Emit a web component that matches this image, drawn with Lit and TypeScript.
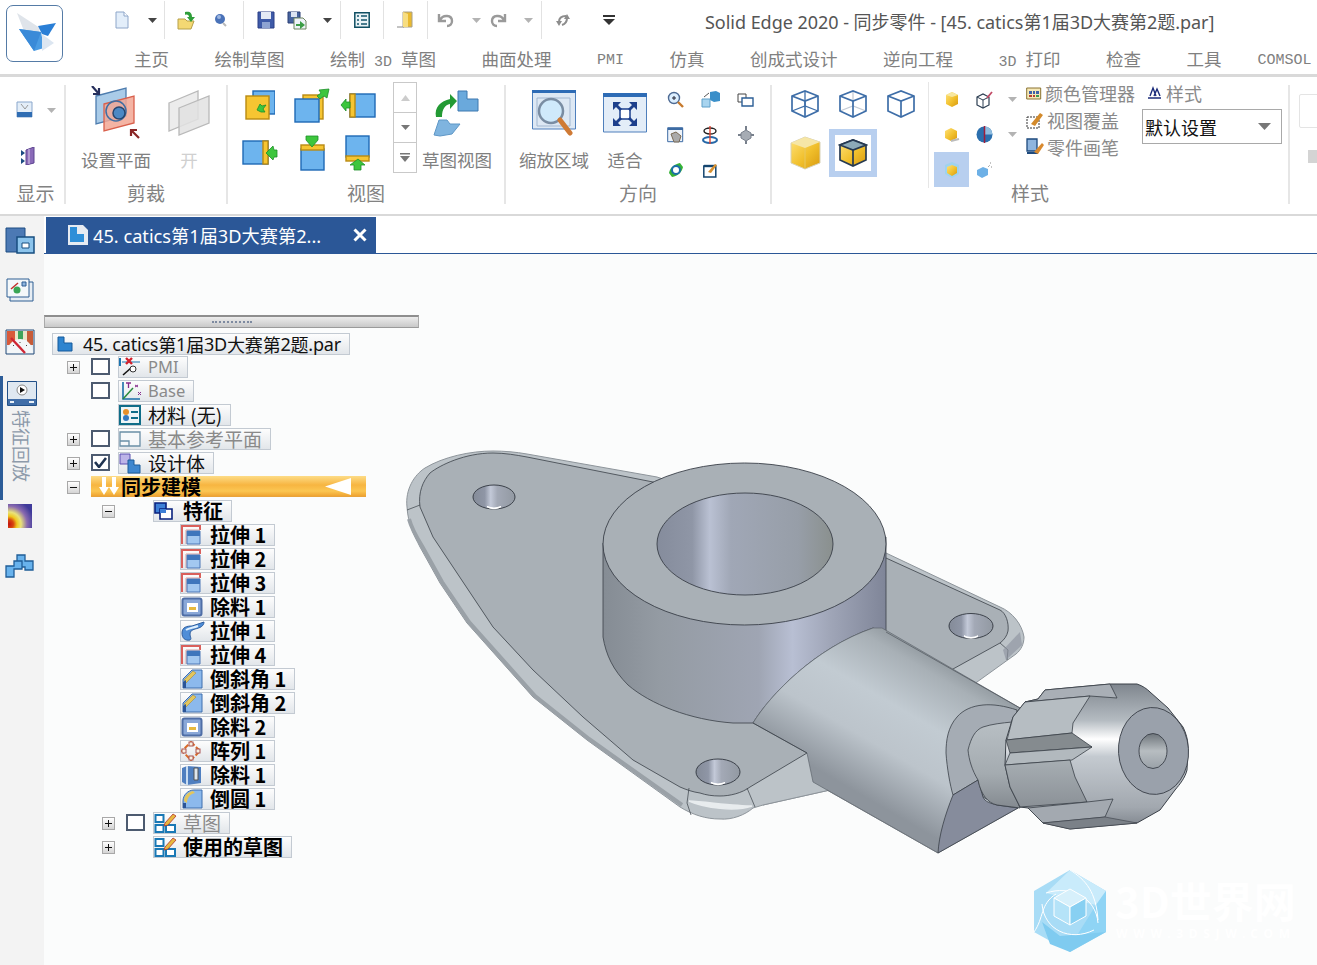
import { LitElement, css, html, svg } from "lit";
import { customElement } from "lit/decorators.js";

const ic = (w: number, h: number, body: unknown) =>
  html`<svg class="ic" width=${w} height=${h} viewBox="0 0 ${w} ${h}">${body}</svg>`;

const B = "#6db4ee", BD = "#1f69b5", Y = "#f6c532", YD = "#b98a12", G = "#3dc63d", GD = "#1d8f2a";

// quick access bar
const qat: Record<string, unknown> = {
  doc: ic(14, 18, svg`<path d="M1 1h8l4 4v12H1z" fill="#e3eefa" stroke="#8ea6c9"/><path d="M9 1v4h4" fill="#fff" stroke="#8ea6c9"/>`),
  open: ic(20, 20, svg`<path d="M1 9h7l2 2h7l-3 8H1z" fill="#f4d873" stroke="#b6a04a"/><path d="M8 2c5-1 7 1 7 5h3l-4 5-4-5h2c0-2-2-3-4-2z" fill="#2f9e3a"/>`),
  ball: ic(14, 16, svg`<circle cx="6" cy="7" r="5" fill="#4a72b8"/><circle cx="5" cy="5" r="2" fill="#9cb6e0"/><path d="M9 11l3 3" stroke="#b9b9b9" stroke-width="2"/>`),
  save: ic(18, 18, svg`<path d="M1 1h16v16H1z" fill="#3e5aa8" stroke="#2a3f86"/><path d="M4 1h10v7H4z" fill="#e4eaf5"/><path d="M5 11h8v6H5z" fill="#8ea3d2"/>`),
  saveall: ic(20, 19, svg`<path d="M1 1h12v11H1z" fill="#47649f" stroke="#2b3f75"/><path d="M4 1h6v5H4z" fill="#dce4f2"/><path d="M7 7h9l3 3v8H7z" fill="#eef3f8" stroke="#6e8560"/><path d="M9 13h4v-3l5 4-5 4v-3H9z" fill="#3c9e46"/>`),
  list: ic(16, 16, svg`<path d="M.8.8h14.4v14.400H.8z" fill="#eaf3f6" stroke="#0f4f63" stroke-width="1.500"/><path d="M3 4h2M7 4h6M3 8h2M7 8h6M3 12h2M7 12h6" stroke="#14566c" stroke-width="1.500"/>`),
  door: ic(18, 18, svg`<path d="M7 1h9v15H7z" fill="#e9b92f" stroke="#a8a08a"/><path d="M1 16h7" stroke="#888"/><path d="M7 1l5 2v13H7z" fill="#f7dd80"/>`),
  undo: ic(18, 16, svg`<path d="M2 2v7h7M3 8c3-6 12-5 12 1 0 3-2 5-5 5" fill="none" stroke="#9a9a9a" stroke-width="2.400"/>`),
  redo: ic(18, 16, svg`<path d="M16 2v7H9M15 8C12 2 3 3 3 9c0 3 2 5 5 5" fill="none" stroke="#9a9a9a" stroke-width="2.400"/>`),
  redo2: ic(16, 16, svg`<path d="M1 9l3 5 3-5zM15 7l-3-5-3 5z" fill="#8d8d8d"/><path d="M4 10c0-4 2-6 7-6M12 6c0 4-2 6-5 7" fill="none" stroke="#8d8d8d" stroke-width="2"/>`),
  more: ic(14, 12, svg`<path d="M1 1h12v2H1z" fill="#333"/><path d="M1 5h12l-6 6z" fill="#333"/>`),
  drop: ic(9, 5, svg`<path d="M0 0h9L4.500 5z" fill="#444"/>`),
  dropg: ic(9, 5, svg`<path d="M0 0h9L4.500 5z" fill="#b3b3b3"/>`),
};

// [icon, width]; a null icon is a separator followed by that much gap
const qatItems: [string | null, number][] = [
  ["doc", 33], ["drop", 16], [null, 12], ["open", 37], ["ball", 29], [null, 13], ["save", 30], ["saveall", 36],
  ["drop", 17], [null, 13], ["list", 29], [null, 12], ["door", 31], [null, 9], ["undo", 35], ["dropg", 17],
  ["redo", 35], ["dropg", 17], [null, 13], ["redo2", 47], ["more", 14],
];

const square = (x: number, y: number, w: number, h: number, f: string, s: string) =>
  svg`<rect x=${x} y=${y} width=${w} height=${h} fill=${f} stroke=${s} stroke-width="1.400"/>`;
const arrow = (p: string) => svg`<path d=${p} fill=${G} stroke=${GD} stroke-width=".8"/>`;

const viewIcons = [
  ic(30, 30, svg`${square(8, 1, 22, 23, B, BD)}${square(1, 6, 23, 23, Y, YD)}${arrow("M12 20l3-6 2 2 4-1-3 4 2 3-4 0z")}`),
  ic(36, 36, svg`${square(9, 8, 20, 24, Y, YD)}${square(1, 12, 24, 23, B, BD)}${arrow("M35 2l-2 9-3-2-4 3-3-3 4-3-2-3z")}`),
  ic(36, 26, svg`${square(10, 2, 25, 23, B, BD)}${square(10, 2, 5, 23, Y, YD)}${arrow("M1 13l5-6v3h4v6H6v3z")}`),
  ic(36, 26, svg`${square(1, 1, 25, 23, B, BD)}${square(21, 1, 5, 23, Y, YD)}${arrow("M35 10v7h-3l-1 3-7-7 7-7 1 4z")}`),
  ic(26, 36, svg`${square(2, 14, 23, 21, B, BD)}${square(2, 10, 23, 5, Y, YD)}${arrow("M7 1h12v4l-6 7-6-7z")}`),
  ic(26, 36, svg`${square(1, 1, 23, 21, B, BD)}${square(1, 21, 23, 5, Y, YD)}${arrow("M13 24l7 6h-4v5H9v-5H5z")}`),
];

const small: Record<string, unknown> = {
  zoom: ic(18, 18, svg`<circle cx="7" cy="7" r="5.500" fill="#dcefff" stroke="#4d6a94" stroke-width="1.400"/><path d="M5 7h4M7 5v4" stroke="#223"/><path d="M11 11l5 5" stroke="#c77a2d" stroke-width="2.400"/>`),
  boxes: ic(20, 17, svg`<path d="M9 1l6-1 4 2v8l-6 1-4-2z" fill="#3a8fc9"/><path d="M1 8h8v8H1z" fill="#a8d4ef" stroke="#5e9fc8"/><path d="M3 6l5-4" stroke="#555"/>`),
  wins: ic(17, 14, svg`<path d="M1 1h8v8H1z" fill="#fff" stroke="#444"/><path d="M5 5h11v8H5z" fill="#fff" stroke="#2d5f96" stroke-width="1.400"/>`),
  hand: ic(17, 16, svg`<path d="M.7.7h15v14h-15z" fill="#eef3f9" stroke="#3d6ba3"/><path d="M1 1h15v2H1z" fill="#3d6ba3"/><path d="M4 7l5-2 5 4-2 6H7z" fill="#aaa" stroke="#7a6a55"/>`),
  rotate: ic(17, 18, svg`<ellipse cx="8" cy="14" rx="7" ry="3" fill="none" stroke="#2668a8" stroke-width="2"/><ellipse cx="8" cy="5" rx="6" ry="3" fill="none" stroke="#222" stroke-width="1.400"/><path d="M8 0v18" stroke="#d43" stroke-width="1.400"/>`),
  cube4: ic(16, 18, svg`<path d="M8 4l5 3v5l-5 3-5-3V7z" fill="#a6acb4" stroke="#78808c"/><path d="M8 0v4M8 15v3M0 9h3M13 9h3" stroke="#78808c" stroke-width="2"/>`),
  spin: ic(16, 16, svg`<path d="M1 11C2 5 7 2 12 1l3 4c-1 5-5 9-11 10z" fill="#35b235"/><circle cx="8" cy="8" r="4" fill="#fff" stroke="#1c6ea8" stroke-width="2"/>`),
  paint: ic(15, 16, svg`<path d="M.8 4h12v11H.8z" fill="#fff" stroke="#14456f" stroke-width="1.500"/><path d="M1 4h12" stroke="#14456f" stroke-width="2.400"/><path d="M5 10l7-8 2 1-6 8z" fill="#d7902f"/>`),
};

const HEX = "M2 7l13-5 13 5v15l-13 6-13-6z";
const FRONT = "M2 7l13 5 13-5M15 12v16";
const HIDDEN = "M15 2v15M2 22l13-5 13 5";
const wire = (hiddenColor: string | null) => ic(30, 30, svg`
  ${hiddenColor ? svg`<path d=${HIDDEN} fill="none" stroke=${hiddenColor} stroke-width="1.300"/>` : ""}
  <path d=${HEX} fill="none" stroke="#3e6ea8" stroke-width="1.700"/>
  <path d=${FRONT} fill="none" stroke="#3e6ea8" stroke-width="1.700"/>`);
const cubes = [
  wire("#3e6ea8"),
  wire("#c5ccd6"),
  wire(null),
  ic(32, 34, svg`<path d="M2 7l14-6 15 5v21l-15 6-14-6z" fill="url(#gold)" stroke="#d8d2b8"/><path d="M2 7l14 5 15-6-15-5z" fill="#f6e6a6"/><path d="M16 12v21" stroke="#e8c860" />`),
  ic(30, 30, svg`<path d=${HEX} fill="url(#gold)" stroke="#263a52" stroke-width="1.700"/><path d="M2 7l13 5 13-5-13-5z" fill="#8caab8" stroke="#263a52" stroke-width="1.700"/><path d="M15 12v16" stroke="#263a52" stroke-width="1.700"/>`),
];

const mini: Record<string, unknown> = {
  gold: ic(14, 16, svg`<path d="M1 3l6-3 6 3v9l-6 3-6-3z" fill="url(#gold)"/><path d="M1 3l6 2 6-2-6-3z" fill="#f7e7a0"/>`),
  frame: ic(18, 18, svg`<path d="M1 6l6-3 6 3v8l-6 3-6-3z" fill="#fff" stroke="#2c3e52" stroke-width="1.200"/><path d="M1 6l6 3 6-3M7 9v8" stroke="#2c3e52" fill="none"/><path d="M11 7l5-6" stroke="#c24a66" stroke-width="1.800"/>`),
  goldS: ic(16, 14, svg`<path d="M1 3l6-3 6 3v7l-6 3-6-3z" fill="url(#gold)"/><path d="M7 13l8-2" stroke="#bbb" stroke-width="2"/>`),
  globe: ic(17, 17, svg`<circle cx="8.500" cy="8.500" r="8" fill="#2b6fae"/><path d="M8.500 8.500V.5A8 8 0 0 1 16.500 8.500z" fill="#8fbde0"/><path d="M8.500 0v17" stroke="#a01c3a" stroke-width="1.500"/>`),
  sel: ic(16, 16, svg`<path d="M1 3l7-3 7 3v9l-7 4-7-4z" fill="#9fd3ee"/><path d="M3 5l5-2 5 2v6l-5 3-5-3z" fill="url(#gold)"/>`),
  spray: ic(17, 16, svg`<path d="M1 8l6-3 5 2v6l-6 3-5-3z" fill="#6db0e6"/><path d="M12 5l2-2M14 1h2M15 5h2" stroke="#888" stroke-dasharray="1 1"/>`),
};

const listIcons = [
  ic(16, 14, svg`<path d="M.7 2h14v11H.7z" fill="#f6e9b8" stroke="#8a7330"/><path d="M3 5h3v3H3zM7 5h2v3H7zM10 5h3v3h-3z" fill="#3f62a8"/><path d="M3 9h3v2H3zM7 9h2v2H7z" fill="#b6402e"/><path d="M10 9h3v2h-3z" fill="#3c9a4d"/>`),
  ic(18, 18, svg`<rect x="1" y="6" width="12" height="11" fill="#fff" stroke="#333" stroke-dasharray="2 1"/><path d="M5 13l9-11 3 2-8 11z" fill="#d38a2b"/>`),
  ic(18, 18, svg`<path d="M1 1h10v12H1z" fill="#8fb5de" stroke="#1e4a7d" stroke-width="1.300"/><path d="M1 15h11" stroke="#1e4a7d" stroke-width="2"/><path d="M8 14l8-9 2 2-6 9z" fill="#d98a2f"/>`),
];

const trIcons: Record<string, unknown> = {
  root: ic(17, 16, svg`<path d="M1 1h6v6h8v8H1z" fill="#2e84cf" stroke="#155b9c"/>`),
  pmi: ic(22, 22, svg`<path d="M1 2v8" stroke="#1a74b0" stroke-width="2"/><path d="M3 6h18" stroke="#1a74b0"/><path d="M7 2l6 6M13 2l-6 6" stroke="#d2202c" stroke-width="2.400"/><path d="M4 19l8-7" stroke="#111" stroke-width="1.600"/><circle cx="14" cy="13" r="3" fill="#fff" stroke="#333"/>`),
  base: ic(24, 22, svg`<path d="M4 2v17h17" fill="none" stroke="#1a6ea8" stroke-width="1.600"/><path d="M4 19L14 8" stroke="#2a8a3a" stroke-width="1.500"/><path d="M7 3h5M9.500 3v5" stroke="#862c8c" stroke-width="1.300"/><path d="M16 5l3 2M19 5l-3 2M19 12l3 3M22 12l-3 3" stroke="#862c8c"/>`),
  mat: ic(22, 20, svg`<path d="M1 1h20v18H1z" fill="#eef5f7" stroke="#0f6d88" stroke-width="2"/><circle cx="7" cy="7" r="3" fill="#e8902a"/><circle cx="7" cy="13" r="3" fill="#3479c0"/><path d="M12 7h7M12 13h7" stroke="#0f6d88" stroke-width="2"/>`),
  plane: ic(22, 20, svg`<path d="M1 3h20v14H1z" fill="#f6f8fa" stroke="#6a8ea6" stroke-width="1.300"/><path d="M1 12h9v5" fill="none" stroke="#6a8ea6" stroke-width="1.300"/>`),
  body: ic(22, 21, svg`<path d="M1 1h10v10H1z" fill="#bdb4e8" stroke="#5a4fb0"/><path d="M9 7h6v5h6v8H9z" fill="#3f87cf" stroke="#1d5c9a"/>`),
  feat: ic(20, 20, svg`<path d="M1 2h11v10H1z" fill="#3d7fd6" stroke="#08217e" stroke-width="1.600"/><path d="M6 8h12v10H6z" fill="#fff" stroke="#08217e" stroke-width="1.600"/><path d="M6 8h6v4H6z" fill="#3d7fd6"/>`),
  ext: ic(20, 20, svg`<path d="M1 19V1h18v4" fill="none" stroke="#d9605c" stroke-width="2"/><path d="M5 19V5h14" fill="none" stroke="#d9a0a0"/><path d="M6 6h13v13H6z" fill="#a3c8f0" stroke="#4a77b6"/><path d="M6 6h13v5H6z" fill="#3f76bc"/>`),
  cut: ic(22, 20, svg`<rect x="1.500" y="1.500" width="19" height="17" rx="2" fill="#8aa8d8" stroke="#4f6ea6" stroke-width="2"/><path d="M6 6h11v9H6z" fill="#fff"/><path d="M8 10h7v3H8z" fill="#e7b93e"/>`),
  sweep: ic(24, 20, svg`<path d="M1 12c0-6 5-7 10-7l12-4c0 4-4 6-9 7-3 1-5 2-5 5 0 3 2 5 0 6-5 1-8-2-8-7z" fill="#4f8ed8" stroke="#2f5e9e"/><path d="M5 9c3-2 7-2 12-4" stroke="#dff0ff" stroke-width="2" fill="none"/>`),
  cham: ic(22, 20, svg`<path d="M2 19V10L11 1h10v18z" fill="#8cb9ec" stroke="#3f6eae"/><path d="M3 11L12 2l3 2-10 10z" fill="#e3c65d" stroke="#a48c3a" stroke-width=".6"/><path d="M2 19v-6l3-2v8z" fill="#2b5597"/>`),
  patt: ic(20, 20, svg`<path d="M10 1l9 9-9 9-9-9z" fill="none" stroke="#d96a28" stroke-width="2" stroke-dasharray="5 2"/><rect x="8" y="1" width="4" height="4" fill="#f8efe0" stroke="#a55"/><rect x="1" y="8" width="4" height="4" fill="#f8efe0" stroke="#a55"/><rect x="15" y="8" width="4" height="4" fill="#f8efe0" stroke="#a55"/><rect x="8" y="15" width="4" height="4" fill="#f8efe0" stroke="#a55"/>`),
  rev: ic(22, 20, svg`<path d="M1 3l5-2 14 1v16l-14 2-5-3z" fill="#4f7fc0"/><path d="M6 1v19" stroke="#c9ddf2" stroke-width="2"/><path d="M13 3h4v12h-4z" fill="#dfe7ee" stroke="#555"/>`),
  round: ic(22, 20, svg`<path d="M2 19v-7C2 6 7 1 13 1h8v18z" fill="#8cb9ec" stroke="#3f6eae"/><path d="M3 12c0-5 4-9 9-10l2 2C9 5 6 9 6 14z" fill="#e3c65d"/><path d="M2 19v-5h3v5z" fill="#2b5597"/>`),
  sk: ic(24, 21, svg`<path d="M1.500 2h8v7h-8zM1.500 12h8v7h-8zM12 12h9v7h-9z" fill="#fff" stroke="#1978b5" stroke-width="2"/><path d="M11 10l8-9 3 2-8 9-4 1z" fill="#e7b93e" stroke="#b0302a" stroke-width=".8"/>`),
};

const railIcons = [
  ic(30, 27, svg`<path d="M1 1h19v24H1z" fill="#4c79b4" stroke="#1c4c82"/><path d="M12 10h17v16H12z" fill="#8cc4ec" stroke="#174e80" stroke-width="1.500"/><path d="M17 16h7v5h-7z" fill="#fff" stroke="#174e80"/>`),
  ic(28, 24, svg`<path d="M4 4h23v19H4z" fill="#e7edf3" stroke="#2f5f93"/><path d="M1 1h22v18H1z" fill="#f4f8fa" stroke="#2f5f93"/><path d="M5 11l7-6" stroke="#c2312c" stroke-width="1.500"/><circle cx="11" cy="12" r="3.500" fill="#3aa655"/><path d="M16 4h4v4h-4z" fill="#8fb5de" stroke="#2f5f93"/>`),
  ic(30, 26, svg`<path d="M1 1h28v24H1z" fill="#e7edf3" stroke="#224a78"/><path d="M2 2h8v14H2z" fill="#d8593a"/><path d="M10 2h4v9h-4z" fill="#ebe4c8"/><path d="M13 2h5v9h-5z" fill="#3ea35a"/><path d="M18 2h4v9h-4z" fill="#ebe4c8"/><path d="M22 2h6v14h-6z" fill="#c75b38"/><path d="M2 24c1-9 6-14 13-14s12 5 13 14z" fill="#f3f6f8"/><path d="M8 16l1 1M15 13v1M22 16l-1 1" stroke="#444"/><path d="M6 9l14 15" stroke="#cf2433" stroke-width="2.400"/>`),
  ic(30, 25, svg`<path d="M.5.500h29v24H.5z" fill="#dfe8f1" stroke="#225088"/><path d="M1 18h28v6H1z" fill="#416ea8"/><path d="M3 20h4v2H3zM22 20h5v2h-5z" fill="#eaf1f8"/><circle cx="15" cy="9" r="5" fill="#fff" stroke="#888"/><path d="M13 6l5 3-5 3z" fill="#111"/>`),
  ic(24, 24, svg`<defs><radialGradient id="heat" cx="4%" cy="84%" r="105%"><stop offset="0" stop-color="#c21212"/><stop offset=".18" stop-color="#d8480e"/><stop offset=".32" stop-color="#efc820"/><stop offset=".48" stop-color="#e9e27a"/><stop offset=".72" stop-color="#8a6ab0"/><stop offset="1" stop-color="#3f3a9a"/></radialGradient></defs><rect width="24" height="24" fill="url(#heat)"/>`),
  ic(30, 24, svg`<path d="M12 1h8v6h8v9h-8v-3h-7v-4h-1z" fill="#68b2ec" stroke="#1f5d97" stroke-width="1.300"/><path d="M1 12h8V7h8v8H9v8H1z" fill="#68b2ec" stroke="#1f5d97" stroke-width="1.300"/>`),
];

type Row = { level: number; exp?: string; check?: string; icon: string; text: string; dim?: boolean; bold?: boolean };
const rows: Row[] = [
  { level: 0, exp: "+", check: "off", icon: "pmi", text: "PMI", dim: true },
  { level: 0, check: "off", icon: "base", text: "Base", dim: true },
  { level: 0, icon: "mat", text: "材料 (无)" },
  { level: 0, exp: "+", check: "off", icon: "plane", text: "基本参考平面", dim: true },
  { level: 0, exp: "+", check: "on", icon: "body", text: "设计体" },
];
const rows2: Row[] = [
  { level: 1, exp: "-", icon: "feat", text: "特征", bold: true },
  ...([["ext", "拉伸 1"], ["ext", "拉伸 2"], ["ext", "拉伸 3"], ["cut", "除料 1"], ["sweep", "拉伸 1"], ["ext", "拉伸 4"], ["cham", "倒斜角 1"], ["cham", "倒斜角 2"], ["cut", "除料 2"], ["patt", "阵列 1"], ["rev", "除料 1"], ["round", "倒圆 1"]] as const).map(
    ([icon, text]) => ({ level: 2, icon, text, bold: true })
  ),
  { level: 1, exp: "+", check: "off", icon: "sk", text: "草图", dim: true },
  { level: 1, exp: "+", icon: "sk", text: "使用的草图", bold: true },
];

const hole = (cx: number, cy: number, rx: number, ry: number) => svg`
  <ellipse cx=${cx} cy=${cy} rx=${rx} ry=${ry} fill="url(#holeS)" stroke="#30363e" stroke-width=".9"/>
  <path d="M${cx - 7} ${cy + ry - 2.4}q7 3 14 0q-7 3.800-14 0z" fill="#fff" stroke="#fff" stroke-width="1.400"/>`;

@customElement("app-root")
export class AppRoot extends LitElement {
  static styles = css`
    :host { display: block; width: 1317px; height: 965px; overflow: hidden; background: #fff; font-family: "Noto Sans CJK SC", "Noto Sans", sans-serif; color: #7d7d7d; }
    .ic { display: block; flex: none; }
    .head { display: flex; height: 74px; border-bottom: 3px solid #d9d9d9; }
    .logo { flex: none; width: 57px; height: 57px; margin: 5px 5px 0 6px; box-sizing: border-box; border: 1.500px solid #557ba6; border-radius: 7px; display: flex; align-items: center; justify-content: center; }
    .head-right { flex: 1; min-width: 0; }
    .qat { display: flex; align-items: center; height: 40px; padding-left: 47px; }
    .qat-item { flex: none; display: flex; align-items: center; }
    .qat-sep { flex: none; width: 1px; height: 38px; background: #e2e2e2; }
    .title { font-family: "Noto Sans", "Noto Sans CJK SC", sans-serif; font-size: 18px; color: #555; white-space: nowrap; margin-left: 89px; margin-top: 1px; letter-spacing: -.03px; }
    .title span { font-family: "Noto Sans CJK SC", sans-serif; }
    .tabs { display: flex; gap: 45.500px; padding-left: 66px; height: 34px; font-size: 17.500px; line-height: 38px; color: #808080; white-space: nowrap; }
    .m { font-family: "Liberation Mono", monospace; font-size: 15px; white-space: pre; }
    .tabs > .m { margin-top: 2px; }
    .tabs .last { margin-left: -9.500px; }

    .ribbon { display: flex; height: 139px; border-bottom: 2px solid #d9d9d9; overflow: hidden; box-sizing: border-box; }
    .group { flex: none; display: flex; flex-direction: column; height: 128px; }
    .body { flex: none; display: flex; height: 104px; }
    .label { height: 24px; line-height: 24px; font-size: 19px; text-align: center; color: #828282; }
    .sep { flex: none; width: 2px; height: 119px; margin-top: 8px; background: #e6e6e6; }
    .g-display { width: 64px; } .g-clip { width: 160px; } .g-view { width: 276px; } .g-orient { width: 264px; } .g-style { width: 516px; }
    .g-display .label { padding-left: 7px; }
    .g-display .body { flex-direction: column; padding: 10px 0 0 16px; box-sizing: border-box; }
    .stack { display: flex; align-items: center; gap: 13px; height: 46px; }
    .stack + .stack { padding-left: 5px; }
    .g-clip .body { padding-left: 15px; }
    .big { flex: none; display: flex; flex-direction: column; align-items: center; }
    .big-ic { height: 71px; display: flex; align-items: center; justify-content: center; }
    .big-t { font-size: 17.500px; line-height: 24px; white-space: nowrap; color: #808080; }
    .big-t.off { color: #d0d0d0; }
    .w70 { width: 70px; } .w72 { width: 72px; } .w44 { width: 44px; margin-left: 16px; }
    .g-view .body { padding-left: 6px; }
    .grid6 { display: grid; grid-template-columns: 52px 52px 40px; grid-auto-rows: 48px; padding-top: 4px; place-items: center; }
    .spin { flex: none; width: 24px; height: 91px; margin: 5px 5px 0 15px; box-sizing: border-box; border: 1px solid #c9c9c9; display: grid; grid-template-rows: 29px 30px 1fr; }
    .spin div { display: flex; align-items: center; justify-content: center; }
    .spin div + div { border-top: 1px solid #c9c9c9; }
    .g-orient .body { padding-left: 12px; }
    .fit { width: 44px; margin-left: 13px; }
    .grid9 { display: grid; grid-template-columns: repeat(3, 35px); grid-auto-rows: 35px; margin: 5px 0 0 11px; place-items: center; align-content: start; }
    .g-style .body { padding-left: 9px; }
    .grid-cubes { display: grid; grid-template-columns: repeat(3, 48px); grid-template-rows: 50px 48px; place-items: center; margin-top: 2px; flex: none; height: 100px; width: 144px; }
    .on { background: #b8cfef; }
    .cube-on { width: 48px; height: 48px; display: flex; align-items: center; justify-content: center; }
    .cube-on > div { width: 36px; height: 36px; background: #fff; display: flex; align-items: center; justify-content: center; }
    .vsep { flex: none; width: 1px; height: 106px; margin: 5px 5px 0 3px; background: #e6e6e6; }
    .grid-mini { display: grid; grid-template-columns: 35px 31px 25px; grid-auto-rows: 35px; place-items: center; margin-top: 5px; align-content: start; flex: none; }
    .grid-mini .on { width: 35px; height: 35px; display: flex; align-items: center; justify-content: center; }
    .list { flex: none; width: 116px; padding-top: 2px; margin-left: 1px; }
    .list div { display: flex; align-items: center; gap: 2px; height: 27px; font-size: 18px; white-space: nowrap; color: #8a8a8a; }
    .list svg { margin-right: 1px; }
    .style-col { flex: none; width: 140px; padding-top: 2px; }
    .style-h { height: 27px; display: flex; align-items: center; gap: 4px; padding-left: 5px; font-size: 18px; color: #8a8a8a; }
    .combo { box-sizing: border-box; height: 35px; margin-top: 3px; border: 1px solid #a9a9a9; display: flex; align-items: center; justify-content: space-between; padding: 0 10px 0 2px; font-size: 18px; color: #111; }
    .rest { display: flex; flex-direction: column; padding: 17px 0 0 9px; }
    .rest i { display: block; width: 40px; height: 34px; box-sizing: border-box; border: 1px solid #e4e4e4; margin-bottom: 22px; border-radius: 2px; }
    .rest b { display: block; width: 14px; height: 13px; margin-left: 9px; background: #d4d4d4; }

    .lower { position: relative; height: 749px; display: flex; background: #fbfcfc; }
    .model { position: absolute; left: 0; top: 0; pointer-events: none; }
    .rail { flex: none; width: 44px; background: #f3f3f3; display: flex; flex-direction: column; align-items: center; padding: 11px 4px 0 0; box-sizing: border-box; z-index: 1; }
    .rail-i { height: 51px; display: flex; justify-content: center; flex: none; }
    .rail-i.play { height: 124px; width: 40px; flex-direction: column; align-items: center; justify-content: flex-start; padding: 5px 0 0 1px; box-sizing: border-box; margin-top: -4px; border-left: 3px solid #2c5c98; margin-left: 0; }
    .rail-i.grad { height: 50px; margin-top: 4px; }
    .vtext { writing-mode: vertical-rl; text-orientation: sideways; font-size: 18px; color: #8d9aaa; margin-top: 4px; line-height: 20px; }
    .main { flex: 1; min-width: 0; z-index: 1; }
    .doc-row { height: 38px; display: flex; align-items: flex-end; box-sizing: border-box; border-bottom: 1px solid #2b5797; padding-left: 2px; background: #fff; }
    .doc-tab { width: 330px; height: 36px; background: #2b5797; color: #fff; display: flex; align-items: center; box-sizing: border-box; padding-left: 21px; font-size: 18.200px; white-space: nowrap; }
    .doc-tab .t { margin-left: 4px; flex: 1; overflow: hidden; font-family: "Noto Sans", "Noto Sans CJK SC", sans-serif; }
    .doc-tab .t span { font-family: "Noto Sans CJK SC", sans-serif; }
    .doc-tab .x { flex: none; width: 32px; display: flex; justify-content: center; }
    .splitter { width: 375px; height: 13px; margin-top: 61px; box-sizing: border-box; border-top: 2px solid #8e8e8e; border-bottom: 1px solid #9a9a9a; border-left: 1px solid #aaa; border-right: 1px solid #aaa; background: linear-gradient(#ececec, #c9c9c9); display: flex; justify-content: center; align-items: center; }
    .splitter span { width: 40px; height: 0; border-top: 2px dotted #7d8aa0; }
    .tree { padding-top: 5px; }
    .row { display: flex; align-items: flex-start; height: 24px; }
    .root-row { height: 23px; padding-left: 8px; }
    .l0 { padding-left: 23px; } .l1 { padding-left: 58px; } .l2 { padding-left: 85px; }
    .slot-e { flex: none; width: 24px; height: 22px; display: flex; align-items: center; }
    .slot-c { flex: none; width: 27px; height: 22px; display: flex; align-items: center; }
    .exp { width: 13px; height: 13px; box-sizing: border-box; border: 1px solid #a8a8a8; background: linear-gradient(#fff, #d4d4d4); display: flex; align-items: center; justify-content: center; }
    .chk { width: 19px; height: 17px; margin-top: -1px; box-sizing: border-box; border: 2px solid #4d5b70; background: #fff; display: flex; align-items: center; justify-content: center; }
    .pill { height: 22px; box-sizing: border-box; border: 1px solid #c3cad2; background: linear-gradient(#fdfdfd, #e2e6ea); display: flex; align-items: center; padding: 0 8px 0 0; white-space: nowrap; color: #111; font-size: 19px; line-height: 20px; }
    .ib { flex: none; width: 22px; margin-right: 7px; }
    .pill.dim { color: #8a8a8a; }
    .pill.bold { font-weight: 700; font-size: 20px; color: #000; }
    .pill.root { padding: 0 8px 0 4px; font-size: 18px; font-family: "Noto Sans", "Noto Sans CJK SC", sans-serif; letter-spacing: -.2px; }
    .pill.root .ic { margin-right: 9px; }
    .pill.root span { font-family: "Noto Sans CJK SC", sans-serif; }
    .pill.base { font-family: "Noto Sans", sans-serif; font-size: 16.500px; }
    .sync { width: 275px; height: 21px; background: linear-gradient(#fddc86, #f7b541 45%, #fbc652 75%, #efa432); border-bottom: 1px solid #e8a33c; display: flex; align-items: center; justify-content: space-between; padding: 0 14px 0 8px; box-sizing: border-box; font-weight: 700; font-size: 20px; color: #000; }
    .sync div { display: flex; align-items: center; gap: 2px; }
  `;

  private treeRow(r: Row) {
    return html`<div class="row l${r.level}">
      <div class="slot-e">${r.exp ? html`<div class="exp">${ic(9, 9, svg`<path d=${r.exp === "+" ? "M1 4.500h7M4.500 1v7" : "M1 4.500h7"} stroke="#111"/>`)}</div>` : ""}</div>
      <div class="slot-c">${r.check ? html`<div class="chk">${r.check === "on" ? ic(13, 11, svg`<path d="M1 5l4 5 7-9" fill="none" stroke="#1f3350" stroke-width="2.600"/>`) : ""}</div>` : ""}</div>
      <div class="pill ${r.dim ? "dim" : ""} ${r.bold ? "bold" : ""} ${r.text === "Base" || r.text === "PMI" ? "base" : ""}"><div class="ib">${trIcons[r.icon]}</div>${r.text}</div>
    </div>`;
  }

  private ribbon() {
    return html`<div class="ribbon">
      <div class="group g-display">
        <div class="body">
          <div class="stack">${ic(18, 18, svg`<path d="M1 1h15v15H1z" fill="#e4eef8" stroke="#8aa7cc"/><path d="M1 11h15v5H1z" fill="#2f6db3"/><path d="M5 3l4 5 3-4" stroke="#999" fill="none"/>`)}${qat.dropg}</div>
          <div class="stack">${ic(14, 18, svg`<path d="M5 3l8-3v16l-8 2z" fill="#8a6ab8" stroke="#5d4490"/><path d="M8 2v15" stroke="#d8cce8"/><path d="M0 3l4 3-4 3zM0 11l4 3-4 3z" fill="#1c4c82"/>`)}</div>
        </div>
        <div class="label">显示</div>
      </div>
      <div class="sep"></div>
      <div class="group g-clip">
        <div class="body">
          <div class="big w70">
            <div class="big-ic">${ic(50, 54, svg`
              <path d="M5 10l30-8v28L5 38z" fill="#a9cbe8" stroke="#4d7cae" stroke-width="1.300"/>
              <path d="M13 18l30-8v27l-30 8z" fill="#f2a794" fill-opacity=".85" stroke="#d9604c" stroke-width="1.300"/>
              <circle cx="25" cy="25" r="10" fill="none" stroke="#3f6ea3" stroke-width="1.500"/>
              <circle cx="28" cy="27" r="6" fill="#4c88c4" stroke="#27466f" stroke-width="1.500"/>
              <path d="M1 0l7 8m0-6v6H2" fill="none" stroke="#262f5c" stroke-width="2.200"/>
              <path d="M48 52l-8-8m0 6v-6h6" fill="none" stroke="#8a2626" stroke-width="2.200"/>`)}</div>
            <div class="big-t">设置平面</div>
          </div>
          <div class="big w44">
            <div class="big-ic">${ic(42, 46, svg`
              <path d="M1 13L30 1v28L1 41z" fill="#ececec" stroke="#b9b9b9" stroke-width="1.300"/>
              <path d="M11 18l30-12v27L11 45z" fill="#e2e2e2" fill-opacity=".85" stroke="#b9b9b9" stroke-width="1.300"/>`)}</div>
            <div class="big-t off">开</div>
          </div>
        </div>
        <div class="label">剪裁</div>
      </div>
      <div class="sep"></div>
      <div class="group g-view">
        <div class="body">
          <div class="grid6">${viewIcons}</div>
          <div class="spin">
            <div>${ic(9, 6, svg`<path d="M0 6h9L4.500 0z" fill="#ccc"/>`)}</div>
            <div>${ic(9, 5, svg`<path d="M0 0h9L4.500 5z" fill="#777"/>`)}</div>
            <div>${ic(10, 9, svg`<path d="M0 0h10v1.500H0z" fill="#777"/><path d="M0 3h10L5 9z" fill="#777"/>`)}</div>
          </div>
          <div class="big w70">
            <div class="big-ic">${ic(48, 48, svg`
              <path d="M25 2h9v8h11v12H25z" fill="#6aa9dc" stroke="#3d78b0"/>
              <path d="M1 46l5-15h8l3 4h10l-8 10-12 2z" fill="#7fb4df" stroke="#5f97c6"/>
              <path d="M3 28C1 18 8 12 17 10V5l7 7-7 8v-5c-5 1-8 5-8 13z" fill="#239a34"/>`)}</div>
            <div class="big-t">草图视图</div>
          </div>
        </div>
        <div class="label">视图</div>
      </div>
      <div class="sep"></div>
      <div class="group g-orient">
        <div class="body">
          <div class="big w72">
            <div class="big-ic">${ic(44, 46, svg`
              <path d="M.5 1h43v38H.5z" fill="#dde8f4" stroke="#4e7fbc"/><path d="M0 0h44v3H0z" fill="#2d6bb5"/>
              <path d="M5 8h33v28H5z" fill="none" stroke="#a2b7d0"/>
              <circle cx="19" cy="21" r="12" fill="#cfe9fb" stroke="#7a8da3" stroke-width="2.500"/>
              <path d="M28 30l10 13" stroke="#cf7a35" stroke-width="5" stroke-linecap="round"/>`)}</div>
            <div class="big-t">缩放区域</div>
          </div>
          <div class="big fit">
            <div class="big-ic">${ic(44, 40, svg`
              <path d="M.5 1h43v38H.5z" fill="#e3edf8" stroke="#4e7fbc"/><path d="M0 0h44v4H0z" fill="#2d6bb5"/>
              <rect x="17" y="16" width="10" height="10" fill="#fff" stroke="#1c3f8c" stroke-width="1.500"/>
              <path d="M10 9h8l-3 3 4 4-2 2-4-4-3 3zM34 9h-8l3 3-4 4 2 2 4-4 3 3zM10 33h8l-3-3 4-4-2-2-4 4-3-3zM34 33h-8l3-3-4-4 2-2 4 4 3-3z" fill="#1c3f8c"/>`)}</div>
            <div class="big-t">适合</div>
          </div>
          <div class="grid9">
            ${small.zoom}${small.boxes}${small.wins}${small.hand}${small.rotate}${small.cube4}${small.spin}${small.paint}
          </div>
        </div>
        <div class="label">方向</div>
      </div>
      <div class="sep"></div>
      <div class="group g-style">
        <div class="body">
          <div class="grid-cubes">
            ${cubes[0]}${cubes[1]}${cubes[2]}${cubes[3]}
            <div class="cube-on on"><div>${cubes[4]}</div></div>
          </div>
          <div class="vsep"></div>
          <div class="grid-mini">
            ${mini.gold}${mini.frame}${qat.dropg}
            ${mini.goldS}${mini.globe}${qat.dropg}
            <div class="on">${mini.sel}</div>${mini.spray}
          </div>
          <div class="list">
            <div>${listIcons[0]}颜色管理器</div>
            <div>${listIcons[1]}视图覆盖</div>
            <div>${listIcons[2]}零件画笔</div>
          </div>
          <div class="style-col">
            <div class="style-h">${ic(15, 14, svg`<path d="M1 12h13" stroke="#1a2a7a" stroke-width="1.500"/><path d="M3 10l3-8 3 8M7 10l3-7 3 7" fill="none" stroke="#1a2a7a" stroke-width="1.400"/>`)}样式</div>
            <div class="combo">默认设置 ${ic(13, 7, svg`<path d="M0 0h13L6.500 7z" fill="#777"/>`)}</div>
          </div>
        </div>
        <div class="label">样式</div>
      </div>
      <div class="sep"></div>
      <div class="rest"><i></i><b></b></div>
    </div>`;
  }

  private model() {
    return svg`<svg class="model" width="1317" height="749" viewBox="0 216 1317 749">
      <defs>
        <linearGradient id="gold" x1="0" y1="0" x2="1" y2="1"><stop offset="0" stop-color="#ffe27a"/><stop offset=".55" stop-color="#f1c02c"/><stop offset="1" stop-color="#d89a10"/></linearGradient>
        <linearGradient id="holeS"><stop offset="0" stop-color="#848b98"/><stop offset=".28" stop-color="#8f96a6"/><stop offset=".42" stop-color="#c3c9d8"/><stop offset=".58" stop-color="#a3a9b6"/><stop offset="1" stop-color="#9299a2"/></linearGradient>
        <linearGradient id="bore" gradientUnits="userSpaceOnUse" x1="657" x2="833" y1="0" y2="0"><stop offset="0" stop-color="#858c9c"/><stop offset=".2" stop-color="#8f96a6"/><stop offset=".3" stop-color="#bac1d3"/><stop offset=".42" stop-color="#a0a7b6"/><stop offset=".8" stop-color="#979ea8"/><stop offset="1" stop-color="#8a908e"/></linearGradient>
        <linearGradient id="bossS" gradientUnits="userSpaceOnUse" x1="603" x2="886" y1="0" y2="0"><stop offset="0" stop-color="#858c94"/><stop offset=".2" stop-color="#949ba3"/><stop offset=".55" stop-color="#9fa5b3"/><stop offset=".67" stop-color="#b8bfd3"/><stop offset=".8" stop-color="#a0a6b8"/><stop offset="1" stop-color="#7f8598"/></linearGradient>
        <linearGradient id="tube" gradientUnits="userSpaceOnUse" x1="956" y1="652" x2="870" y2="800"><stop offset="0" stop-color="#828a90"/><stop offset=".18" stop-color="#a8b0b6"/><stop offset=".45" stop-color="#c2cbd2"/><stop offset=".7" stop-color="#bcc4cb"/><stop offset="1" stop-color="#8d949c"/></linearGradient>
        <linearGradient id="nut" x1="0" y1="0" x2="0" y2="1"><stop offset="0" stop-color="#7f868e"/><stop offset=".25" stop-color="#b4bbc1"/><stop offset=".38" stop-color="#ffffff"/><stop offset=".5" stop-color="#c4cad0"/><stop offset=".85" stop-color="#a2a8af"/><stop offset="1" stop-color="#7c828a"/></linearGradient>
        <linearGradient id="neck" x1="0" y1="0" x2="0" y2="1"><stop offset="0" stop-color="#b8bfc4"/><stop offset=".6" stop-color="#a4abb0"/><stop offset="1" stop-color="#848a90"/></linearGradient>
        <linearGradient id="nutLow" x1="0" y1="0" x2="0" y2="1"><stop offset="0" stop-color="#a7aeb3"/><stop offset="1" stop-color="#8b9197"/></linearGradient>
        <linearGradient id="nutHole" x1="0" y1="0" x2="0" y2="1"><stop offset="0" stop-color="#6e757b"/><stop offset=".5" stop-color="#b7bdc1"/><stop offset="1" stop-color="#9aa1a8"/></linearGradient>
      </defs>

      <path d="M763 805L807 780 830 790z" fill="#bbc1d6" stroke="#4a505a" stroke-width=".6"/>
      <path d="M407 507C405 490 414 475 425 468 443 457 470 451 493 451 504 451 516 452 527 454L657 477 886 553 1000 607C1012 612 1022 624 1024 637 1024 644 1021 650 1016 654L977 682 830 790 763 805 753 808C745 815 732 820 720 819 706 819 693 815 680 807L587 740 533 697 467 623 440 583 420 547C414 535 408 524 407 507z" fill="#bcc3c8" stroke="#8e959b" stroke-width="1"/>
      <path d="M409 519C412 530 417 538 422 546L442 582 469 622 535 696 589 739 682 805" fill="none" stroke="#9aa1a7" stroke-width="4"/>
      <path d="M420 507C418 492 423 481 430 473 440 465 465 453 493 453 505 453 516 455 527 457L653 482 886 558 1000 610C1006 613 1009 623 1008 631 1007 636 1004 640 1000 643L953 669 807 753 750 787C742 793 730 796 720 796 712 796 706 795 700 793 693 792 687 790 680 787L633 760 583 717 533 670 493 627 457 573 433 537z" fill="#a9b0b6" stroke="#3a4048" stroke-width=".8"/>
      <path d="M689 788L687 803 691 815M747 788L755 807M407 510L420 505M1000 643L1008 650 1007 660" fill="none" stroke="#3a4048" stroke-width=".7"/>
      <path d="M689 801C705 808 735 812 752 806 736 806 706 802 689 801z" fill="#e8ecee" stroke="#e8ecee" stroke-width="1.500"/>
      <path d="M1003 650L1020 632 1022 645 1006 660z" fill="#8d93a0" opacity=".65"/>
      ${hole(494, 497, 21, 12)}${hole(718, 772, 22, 13)}${hole(971, 626, 22, 12.5)}

      <path d="M603 543V637C606 655 613 670 628 685 650 704 690 720 733 723H753C770 695 815 648 873 628L886 632V537z" fill="url(#bossS)" stroke="#3a4048" stroke-width=".8"/>
      <ellipse cx="744.500" cy="544" rx="141.500" ry="81" fill="#a9b0b6" stroke="#3a4048" stroke-width=".9"/>
      <ellipse cx="745" cy="544" rx="88" ry="51" fill="url(#bore)" stroke="#3a4048" stroke-width=".9"/>

      <path d="M753 723C770 695 815 648 873 628H882L1020 708 1018 808 938 853 827 790 813 782 807 753z" fill="url(#tube)" stroke="#5f666d" stroke-width=".7"/>
      <path d="M753 723L807 753" stroke="#3a4048" stroke-width=".8"/>
      <path d="M886 632L1020 708" stroke="#4f555c" stroke-width=".7"/>
      <path d="M938 853L827 790" stroke="#6b7178" stroke-width=".8"/>
      <path d="M1017 710C1005 706 993 704 983 705 972 706 963 710 957 717 948 727 946 740 946 753 947 768 950 785 953 795L978 780 983 797 1010 812z" fill="#a5acb4" stroke="#3a4048" stroke-width=".8"/>
      <path d="M953 795C945 815 939 835 938 853L1018 808 997 805C990 803 985 802 983 797L978 780z" fill="#868c9c" stroke="#3a4048" stroke-width=".8"/>
      <path d="M1012 722C1002 723 992 724 983 727 975 730 971 738 968 750 969 760 972 770 978 780 981 795 988 803 997 805L1020 808 1008 770V745z" fill="url(#neck)" stroke="#3a4048" stroke-width=".8"/>

      <path d="M1038 699L1045 690 1110 684H1137C1143 686 1147 689 1150 692L1168 708 1183 727C1186 733 1188 740 1188 747L1187 770C1185 778 1180 784 1175 790L1160 810 1137 823 1070 829 1043 823 1028 808 1020 807 1010 787 1005 765 1006 740 1013 717 1025 702z" fill="url(#nut)" stroke="#3a4048" stroke-width="1"/>
      <path d="M1038 699L1045 690 1110 684 1117 698 1090 696 1025 702z" fill="#a9afb6" stroke="#3a4048" stroke-width=".8"/>
      <path d="M1025 702L1090 696 1073 723 1072 733 1007 740 1013 717z" fill="#b6bdc2" stroke="#3a4048" stroke-width=".8"/>
      <path d="M1006 740L1072 733 1092 747 1010 753z" fill="#858b8f" stroke="#3a4048" stroke-width=".8"/>
      <path d="M1010 753L1092 747 1072 760 1005 765z" fill="#b2b9be" stroke="#3a4048" stroke-width=".8"/>
      <path d="M1005 765L1070 760 1075 777 1087 802 1020 807 1010 787z" fill="url(#nutLow)" stroke="#3a4048" stroke-width=".8"/>
      <path d="M1028 808L1087 802 1113 799 1105 817 1043 823z" fill="#a3a9b0" stroke="#3a4048" stroke-width=".8"/>
      <path d="M1043 823L1105 817 1137 823 1070 829z" fill="#7b8188" stroke="#3a4048" stroke-width=".6"/>
      <ellipse cx="1153.500" cy="751" rx="35" ry="43.500" fill="#9aa1ab" stroke="#3a4048" stroke-width=".9" transform="rotate(-4 1153 751)"/>
      <ellipse cx="1153" cy="751" rx="14" ry="17.500" fill="url(#nutHole)" stroke="#3a4048" stroke-width=".9"/>

      <g stroke="#ffffff" stroke-width="1">
        <path d="M1070 870l36 21v41l-36 20-36-20v-41z" fill="#a8dcf6" stroke="none"/>
        <path d="M1070 870l36 21-10 14-26-6-24-6z" fill="#c9ebfb" stroke="none"/>
        <path d="M1106 891v41l-30 5 20-32z" fill="#8fd4f5" stroke="none"/>
        <path d="M1106 932l-36 20-20-8-8-22 18 14z" fill="#7fcbf0" stroke="none"/>
        <path d="M1046 893c24-8 50 4 52 30M1094 930c-24 12-50 0-52-26M1070 870c16 10 26 22 28 50M1034 932c10-14 6-28 22-38" fill="none"/>
        <path d="M1070 889l16 9-16 9-16-9z" fill="#d7f0fb"/>
        <path d="M1054 898l16 9v18l-16-9z" fill="#b5e3f8"/>
        <path d="M1086 898l-16 9v18l16-9z" fill="#88d0f2"/>
      </g>
      <text x="1115" y="918" font-size="42" font-weight="700" fill="#ffffff" font-family="Noto Sans CJK SC, sans-serif">3D世界网</text>
      <text x="1116" y="938" font-size="12" font-weight="700" fill="#ffffff" textLength="174" font-family="Noto Sans, sans-serif">WWW.3DSJW.COM</text>
    </svg>`;
  }

  render() {
    return html`
      <div class="head">
        <div class="logo">${ic(50, 50, svg`
          <path d="M7 4L30 19 24 41 14 22z" fill="#dfe4ea"/>
          <path d="M9 20l22 3 3 16-10 3z" fill="#4a9be3"/>
          <path d="M9 20l22 3-7 19z" fill="#3a8ad8"/>
          <path d="M28 17l18-3-8 13-6-2z" fill="#2a7fd6"/>
          <path d="M32 25l12 9-12 8z" fill="#dce6f1"/>`)}</div>
        <div class="head-right">
          <div class="qat">
            ${qatItems.map(([k, w]) =>
              k
                ? html`<div class="qat-item" style="width:${w}px">${qat[k]}</div>`
                : html`<div class="qat-sep" style="margin-right:${w}px"></div>`
            )}
            <div class="title">Solid Edge 2020 - <span>同步零件</span> - [45. catics<span>第</span>1<span>届</span>3D<span>大赛第</span>2<span>题</span>.par]</div>
          </div>
          <div class="tabs">
            <span>主页</span><span>绘制草图</span>
            <span>绘制<span class="m"> 3D </span>草图</span>
            <span>曲面处理</span><span class="m">PMI</span><span>仿真</span><span>创成式设计</span><span>逆向工程</span>
            <span><span class="m">3D </span>打印</span>
            <span>检查</span><span>工具</span><span class="m last">COMSOL</span>
          </div>
        </div>
      </div>
      ${this.ribbon()}
      <div class="lower">
        ${this.model()}
        <div class="rail">
          <div class="rail-i">${railIcons[0]}</div>
          <div class="rail-i">${railIcons[1]}</div>
          <div class="rail-i">${railIcons[2]}</div>
          <div class="rail-i play">${railIcons[3]}<div class="vtext">特征回放</div></div>
          <div class="rail-i grad">${railIcons[4]}</div>
          <div class="rail-i">${railIcons[5]}</div>
        </div>
        <div class="main">
          <div class="doc-row">
            <div class="doc-tab">${ic(22, 22, svg`<path d="M1 1h15l5 5v15H1z" fill="#e6ebf2"/><path d="M3 3h7v7h7v8H3z" fill="#2f8fd8"/>`)}
              <div class="t">45. catics<span>第</span>1<span>届</span>3D<span>大赛第</span>2...</div>
              <div class="x">${ic(14, 14, svg`<path d="M1.500 1.500l11 11M12.500 1.500l-11 11" stroke="#fff" stroke-width="3"/>`)}</div></div>
          </div>
          <div class="splitter"><span></span></div>
          <div class="tree">
            <div class="row root-row"><div class="pill root">${trIcons.root}45. catics<span>第</span>1<span>届</span>3D<span>大赛第</span>2<span>题</span>.par</div></div>
            ${rows.map((r) => this.treeRow(r))}
            <div class="row l0">
              <div class="slot-e"><div class="exp">${ic(9, 9, svg`<path d="M1 4.500h7" stroke="#111"/>`)}</div></div>
              <div class="sync"><div>${ic(20, 18, svg`<path d="M3 0h4v10h3l-5 8-5-8h3zM13 0h4v10h3l-5 8-5-8h3z" fill="#fff"/>`)}同步建模</div>${ic(27, 17, svg`<path d="M0 8.500L26 0v17z" fill="#fff"/>`)}</div>
            </div>
            ${rows2.map((r) => this.treeRow(r))}
          </div>
        </div>
      </div>
    `;
  }
}
